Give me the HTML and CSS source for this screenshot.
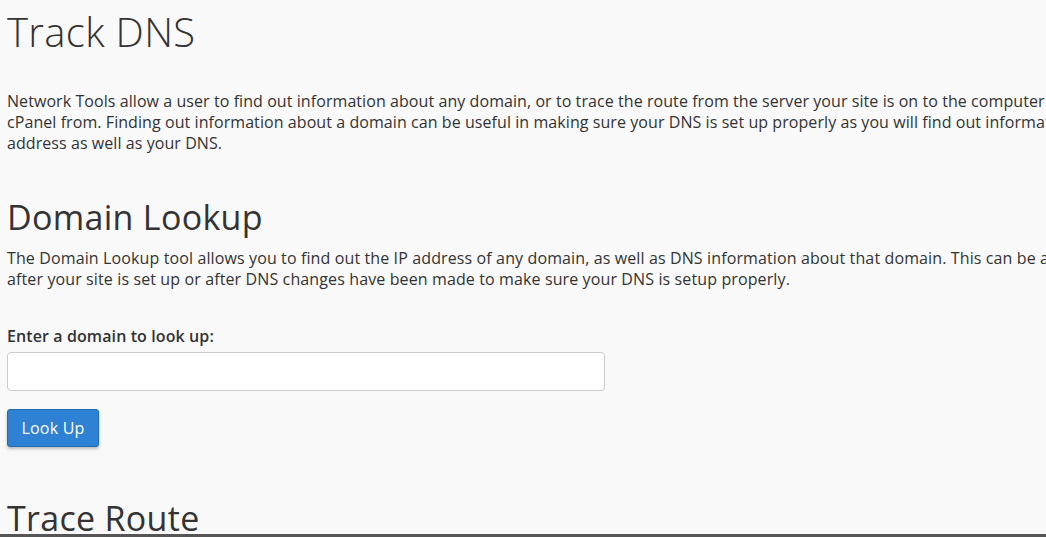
FILE: index.html
```html
<!DOCTYPE html>
<html lang="en">
<head>
<meta charset="utf-8">
<title>Track DNS</title>
<link rel="stylesheet" href="styles.css">
</head>
<body>
<main class="page">
  <h1 class="page-title">Track DNS</h1>
  <p class="intro">Network Tools allow a user to find out information about any domain, or to trace the route from the server your site is on to the computer you are accessing cPanel from. Finding out information about a domain can be useful in making sure your DNS is set up properly as you will find out information about your IP address as well as your DNS.</p>

  <section class="section">
    <h2 class="section-title">Domain Lookup</h2>
    <p class="section-desc">The Domain Lookup tool allows you to find out the IP address of any domain, as well as DNS information about that domain. This can be a very useful tool right after your site is set up or after DNS changes have been made to make sure your DNS is setup properly.</p>
    <form class="lookup-form">
      <label class="field-label" for="domain">Enter a domain to look up:</label>
      <input class="field-input" id="domain" type="text">
      <button class="btn-primary" type="button">Look Up</button>
    </form>
  </section>

  <section class="section section-trace">
    <h2 class="section-title">Trace Route</h2>
  </section>
</main>
<div class="window-edge"></div>
</body>
</html>
```

FILE: styles.css
```css
html, body {
  margin: 0;
  padding: 0;
  overflow: hidden;
}

body {
  background: #f9f9f9;
  color: #333;
  font-family: "Open Sans", "Noto Sans", sans-serif;
  font-size: 16px;
  line-height: 21px;
}

.page {
  width: 1212px;
  padding: 0 7px;
  display: flex;
  flex-direction: column;
}

.page-title {
  margin: 10px 0 0 0;
  font-size: 40px;
  font-weight: 300;
  letter-spacing: 0.35px;
  line-height: 44px;
  color: #333;
}

.intro {
  margin: 37px 0 0 0;
  letter-spacing: 0.07px;
}

.section {
  display: flex;
  flex-direction: column;
}

.section-title {
  margin: 45px 0 0 0;
  font-size: 34px;
  font-weight: 400;
  letter-spacing: 0.3px;
  line-height: 36px;
  color: #333;
}

.section-desc {
  margin: 13px 0 0 0;
  letter-spacing: 0.12px;
}

.lookup-form {
  display: flex;
  flex-direction: column;
  align-items: flex-start;
  margin-top: 36px;
}

.field-label {
  font-weight: 600;
  letter-spacing: 0.1px;
}

.field-input {
  margin-top: 5px;
  width: 598px;
  height: 39px;
  box-sizing: border-box;
  border: 1px solid #cccccc;
  border-radius: 4px;
  background: #fff;
  font: inherit;
  padding: 6px 12px;
}

.btn-primary {
  margin-top: 18px;
  width: 92px;
  height: 38px;
  box-sizing: border-box;
  background: #2e81d3;
  border: 1px solid #1f6db8;
  border-radius: 3px;
  color: #fff;
  font-family: inherit;
  font-size: 16px;
  letter-spacing: 0.2px;
  padding: 0;
  box-shadow: 0 2px 3px rgba(0, 0, 0, 0.25);
}

.section-trace .section-title {
  margin-top: 53px;
}

.window-edge {
  position: fixed;
  left: 0;
  right: 0;
  bottom: 0;
  height: 3px;
  background: #555;
}
```
